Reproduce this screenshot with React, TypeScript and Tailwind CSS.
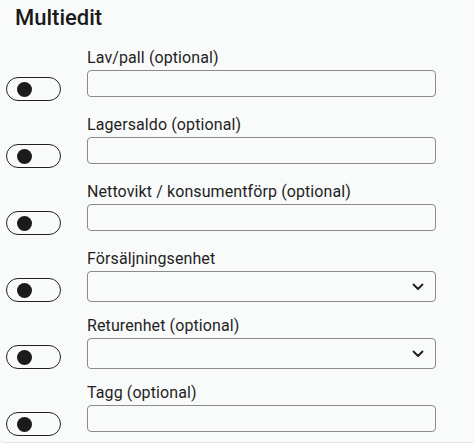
import React from "react";

type Field = {
  label: string;
  kind: "text" | "select";
};

const fields: Field[] = [
  { label: "Lav/pall (optional)", kind: "text" },
  { label: "Lagersaldo (optional)", kind: "text" },
  { label: "Nettovikt / konsumentförp (optional)", kind: "text" },
  { label: "Försäljningsenhet", kind: "select" },
  { label: "Returenhet (optional)", kind: "select" },
  { label: "Tagg (optional)", kind: "text" },
];

function Toggle() {
  return (
    <div className="flex h-[24px] w-[55px] items-center rounded-full border border-[#222] pl-[10px]">
      <div className="h-[15px] w-[15px] rounded-full bg-[#1b1b1b]" />
    </div>
  );
}

function Chevron() {
  return (
    <svg width="12" height="8" viewBox="0 0 12 8" fill="none">
      <path d="M1.5 1.5 6 6 10.5 1.5" stroke="#1b1b1b" strokeWidth="1.8" strokeLinecap="round" strokeLinejoin="round" />
    </svg>
  );
}

function FieldRow({ field }: { field: Field }) {
  return (
    <div className="flex items-end">
      <div className="w-[87px] shrink-0 pl-[6px]">
        <Toggle />
      </div>
      <div className="flex w-[349px] flex-col">
        <label className="text-[16px] leading-[18px] tracking-[0.1px] text-[#1f1f1f]">{field.label}</label>
        <div className="mt-[3px] h-[31px]">
          {field.kind === "text" ? (
            <div className="h-[27px] w-full rounded-[4px] border border-[#8a8a8a]" />
          ) : (
            <div className="flex h-[31px] w-full items-center justify-end rounded-[4px] border border-[#8a8a8a] pr-[11px]">
              <Chevron />
            </div>
          )}
        </div>
      </div>
    </div>
  );
}

export default function App() {
  return (
    <div className="h-[445px] w-[475px] bg-white font-['Roboto',sans-serif]">
      <div className="h-[443px] rounded-b-[4px] border-b border-[#e3e4e4] bg-[#f9fafa] pt-[4px]">
        <h1 className="pl-[15px] text-[22px] font-medium leading-[28px] text-[#1a1a1a]">Multiedit</h1>
        <div className="mt-[17px] flex flex-col gap-[15px]">
          {fields.map((f) => (
            <FieldRow key={f.label} field={f} />
          ))}
        </div>
      </div>
    </div>
  );
}
